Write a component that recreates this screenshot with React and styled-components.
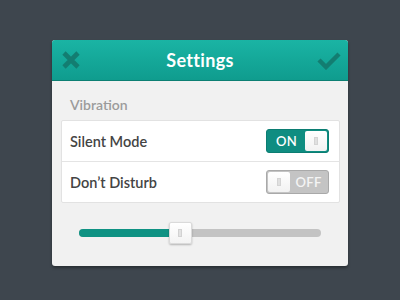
import styled, { createGlobalStyle } from 'styled-components';

const Global = createGlobalStyle`
  html, body {
    margin: 0;
    background: #3e464e;
  }
  body {
    width: 400px;
    height: 300px;
    font-family: Lato, 'Open Sans', sans-serif;
  }
`;

const Page = styled.div`
  width: 400px;
  height: 300px;
  display: flex;
  justify-content: center;
  padding-top: 40px;
  box-sizing: border-box;
`;

const Panel = styled.div`
  width: 296px;
  height: 226px;
  background: #f1f1f1;
  border-radius: 3px;
  box-shadow: 0 2px 3px rgba(0, 0, 0, 0.35);
  display: flex;
  flex-direction: column;
  overflow: hidden;
`;

const Header = styled.div`
  height: 40px;
  flex-shrink: 0;
  background: linear-gradient(#1ab4a4, #0f9c8e);
  border-bottom: 1px solid #0c7f73;
  display: flex;
  align-items: center;
  justify-content: space-between;
  padding: 0 7px 0 7px;
`;

const Title = styled.div`
  color: #fff;
  font-size: 18px;
  font-weight: 700;
  letter-spacing: 0.3px;
`;

const IconBtn = styled.div`
  width: 24px;
  height: 22px;
  display: flex;
  align-items: center;
  justify-content: center;
`;

const Body = styled.div`
  padding: 15px 8px 0 9px;
  display: flex;
  flex-direction: column;
`;

const Section = styled.div`
  color: #9b9b9b;
  font-size: 14px;
  font-weight: 600;
  padding-left: 9px;
  margin-bottom: 7px;
`;

const Card = styled.div`
  background: #fff;
  border: 1px solid #e2e2e2;
  border-radius: 2px;
`;

const Row = styled.div`
  height: 40px;
  display: flex;
  align-items: center;
  justify-content: space-between;
  padding: 0 10px 0 8px;
  border-top: ${p => (p.first ? 'none' : '1px solid #e4e4e4')};
  color: #444;
  font-size: 14.5px;
  font-weight: 600;
`;

const Toggle = styled.div`
  width: 63px;
  height: 24px;
  box-sizing: border-box;
  border-radius: 3px;
  border: 1px solid ${p => (p.on ? '#0b7d72' : '#a9a9a9')};
  background: ${p => (p.on ? '#0f8d81' : '#c4c4c4')};
  display: flex;
  flex-direction: ${p => (p.on ? 'row' : 'row-reverse')};
  align-items: center;
  padding: 1px;
`;

const ToggleLabel = styled.div`
  flex: 1;
  text-align: center;
  color: ${p => (p.on ? '#fff' : '#f4f4f4')};
  font-size: 13px;
  font-weight: 600;
  letter-spacing: 0.3px;
`;

const Knob = styled.div`
  width: 22px;
  height: 20px;
  background: linear-gradient(#fff, #f2f2f2);
  border-radius: 2px;
  display: flex;
  align-items: center;
  justify-content: center;
  &::after {
    content: '';
    width: 4px;
    height: 8px;
    background: #e0e0e0;
    border: 1px solid #d4d4d4;
    box-sizing: border-box;
  }
`;

const SliderWrap = styled.div`
  margin: 19px 19px 0 18px;
  height: 22px;
  display: flex;
  align-items: center;
  position: relative;
`;

const Track = styled.div`
  flex: 1;
  height: 8px;
  border-radius: 4px;
  background: #c3c3c3;
  display: flex;
  overflow: hidden;
`;

const Fill = styled.div`
  background: #0f9283;
  height: 100%;
`;

const Thumb = styled.div`
  position: absolute;
  top: 0;
  width: 23px;
  height: 22px;
  box-sizing: border-box;
  border-radius: 2px;
  background: linear-gradient(#fff, #f3f3f3);
  border: 1px solid #dadada;
  box-shadow: 0 1px 2px rgba(0, 0, 0, 0.25);
  display: flex;
  align-items: center;
  justify-content: center;
  &::after {
    content: '';
    width: 4px;
    height: 8px;
    background: #e2e2e2;
    border: 1px solid #d2d2d2;
    box-sizing: border-box;
  }
`;

const value = 0.38;

const App = () => {
  return (
    <Page>
      <Global />
      <Panel>
        <Header>
          <IconBtn>
            <svg width="20" height="20" viewBox="0 0 20 20">
              <path d="M3 3 L17 17 M17 3 L3 17" stroke="#137d71" strokeWidth="4.6" strokeLinecap="butt" />
            </svg>
          </IconBtn>
          <Title>Settings</Title>
          <IconBtn>
            <svg width="24" height="20" viewBox="0 0 24 20">
              <path d="M2 10 L9 17 L22 4" stroke="#137d71" strokeWidth="4.4" fill="none" />
            </svg>
          </IconBtn>
        </Header>
        <Body>
          <Section>Vibration</Section>
          <Card>
            <Row first>
              Silent Mode
              <Toggle on>
                <ToggleLabel on>ON</ToggleLabel>
                <Knob />
              </Toggle>
            </Row>
            <Row>
              Don’t Disturb
              <Toggle>
                <ToggleLabel>OFF</ToggleLabel>
                <Knob />
              </Toggle>
            </Row>
          </Card>
          <SliderWrap>
            <Track>
              <Fill style={{ width: `${value * 100}%` }} />
            </Track>
            <Thumb style={{ left: `calc(${value * 100}% - 2px)` }} />
          </SliderWrap>
        </Body>
      </Panel>
    </Page>
  );
};

export default App;
